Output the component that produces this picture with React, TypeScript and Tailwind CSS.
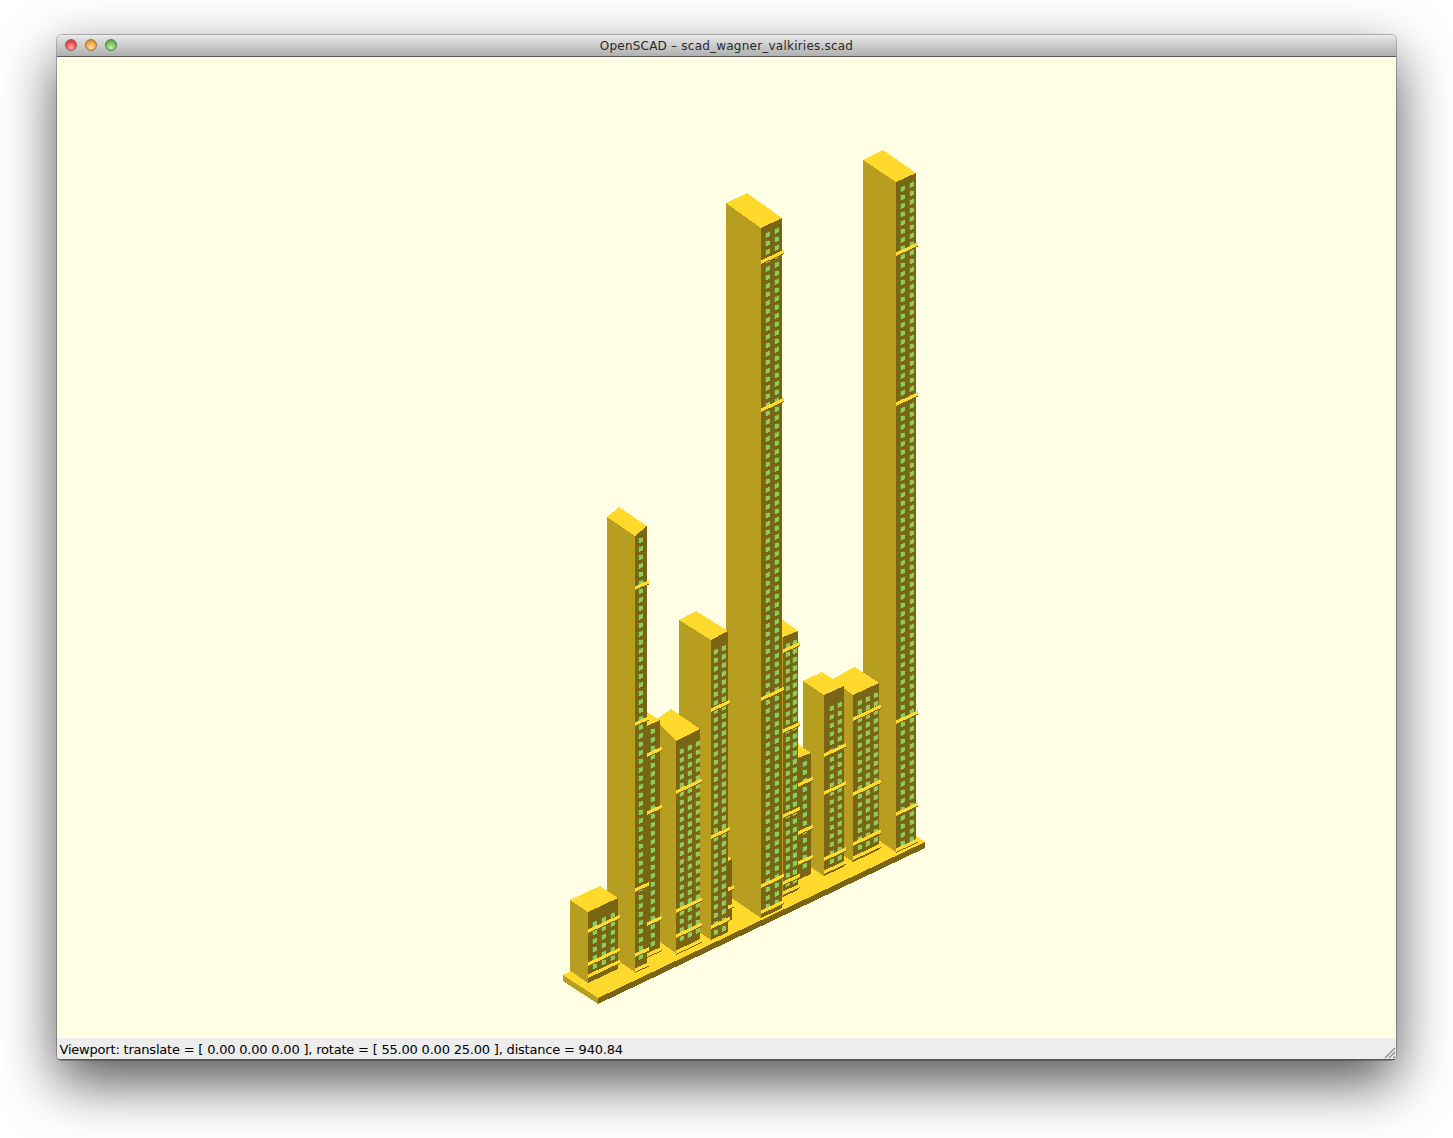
const TOP = "#ffd92b";
const LEFT = "#b89e20";
const RIGHT = "#7a6514";
const WINDOW_DARK = "#5f8a2c";
const WINDOW_LIGHT = "#93c95a";
const SLOPE = 0.47;
const PITCH = 8.5;

type Tower = {
  left: number;
  front: number;
  right: number;
  yLeft: number;
  yFront: number;
  yRight: number;
  apex: [number, number];
  bottom: number;
  cols: number[];
  inset: number;
  bands: number[];
};

// painted back to front, right end of the row first
const towers: Tower[] = [
  { left: 863, front: 896, right: 916, yLeft: 160, yFront: 182, yRight: 173, apex: [883, 150], bottom: 852, cols: [900, 909], inset: 5, bands: [256, 406, 724, 816, 852] },
  { left: 832, front: 853, right: 879, yLeft: 679, yFront: 695, yRight: 683, apex: [855, 667], bottom: 862, cols: [857, 865, 873], inset: 6, bands: [721, 796, 846, 860] },
  { left: 803, front: 824, right: 844, yLeft: 681, yFront: 695, yRight: 686, apex: [822, 672], bottom: 876, cols: [829, 837], inset: 12, bands: [757, 795, 861, 874] },
  { left: 790, front: 798, right: 811, yLeft: 752, yFront: 758, yRight: 753, apex: [798, 744], bottom: 880, cols: [802], inset: 4, bands: [787, 835, 865] },
  { left: 770, front: 783, right: 798, yLeft: 628, yFront: 637, yRight: 631, apex: [783, 620], bottom: 897, cols: [785, 792], inset: 6, bands: [653, 733, 818, 885, 895] },
  { left: 726, front: 761, right: 782, yLeft: 203, yFront: 228, yRight: 218, apex: [747, 193], bottom: 918, cols: [765, 774], inset: 5, bands: [264, 412, 701, 888, 914] },
  { left: 715, front: 720, right: 732, yLeft: 860, yFront: 865, yRight: 859, apex: [720, 851], bottom: 925, cols: [], inset: 0, bands: [895, 913] },
  { left: 679, front: 711, right: 728, yLeft: 620, yFront: 640, yRight: 631, apex: [696, 611], bottom: 940, cols: [713, 721], inset: 9, bands: [712, 839, 929] },
  { left: 656, front: 676, right: 700, yLeft: 720, yFront: 741, yRight: 729, apex: [671, 709], bottom: 953, cols: [679, 687, 695], inset: 8, bands: [794, 913, 938, 954] },
  { left: 640, front: 647, right: 660, yLeft: 718, yFront: 726, yRight: 720, apex: [647, 712], bottom: 958, cols: [650], inset: 3, bands: [757, 815, 926, 957] },
  { left: 607, front: 635, right: 647, yLeft: 517, yFront: 536, yRight: 526, apex: [619, 507], bottom: 972, cols: [638], inset: 2, bands: [590, 726, 892, 957, 972] },
  { left: 570, front: 588, right: 618, yLeft: 900, yFront: 912, yRight: 898, apex: [600, 886], bottom: 983, cols: [592, 601, 610], inset: 10, bands: [933, 966, 978] },
];

function pts(list: number[][]) {
  return list.map((p) => p.join(",")).join(" ");
}

function TowerShape({ t }: { t: Tower }) {
  const bottomLeft = t.bottom - (t.front - t.left) * 0.68;
  const bottomRight = t.bottom - (t.right - t.front) * SLOPE;

  const windows: { x: number; y: number }[] = [];
  for (const x of t.cols) {
    const start = t.yFront + t.inset - (x - t.front) * SLOPE;
    const end = t.bottom - 3 - (x - t.front) * SLOPE;
    for (let y = start; y + 7 < end; y += PITCH) windows.push({ x, y });
  }

  return (
    <g>
      <polygon fill={LEFT} points={pts([[t.left, t.yLeft], [t.front, t.yFront], [t.front, t.bottom], [t.left, bottomLeft]])} />
      <polygon fill={RIGHT} points={pts([[t.front, t.yFront], [t.right, t.yRight], [t.right, bottomRight], [t.front, t.bottom]])} />
      <polygon fill={TOP} points={pts([[t.left, t.yLeft], t.apex, [t.right, t.yRight], [t.front, t.yFront]])} />
      {windows.map((w, i) => (
        <g key={i}>
          <polygon fill={WINDOW_DARK} points={pts([[w.x, w.y + 2], [w.x + 5, w.y], [w.x + 5, w.y + 5], [w.x, w.y + 7]])} />
          <polygon fill={WINDOW_LIGHT} points={pts([[w.x + 1, w.y + 2], [w.x + 5, w.y + 1], [w.x + 5, w.y + 5], [w.x + 1, w.y + 7]])} />
        </g>
      ))}
      {t.bands.map((y) => {
        const x1 = t.right + 2;
        const y1 = y - (x1 - t.front) * SLOPE;
        return (
          <g key={y}>
            <polygon fill={RIGHT} points={pts([[t.front, y], [x1, y1], [x1, y1 + 1], [t.front, y + 1]])} />
            <polygon fill={TOP} points={pts([[t.front, y - 3.5], [x1, y1 - 3.5], [x1, y1], [t.front, y]])} />
          </g>
        );
      })}
    </g>
  );
}

function Scene() {
  return (
    <svg className="block h-full w-full" viewBox="57 57 1339 981" shapeRendering="crispEdges">
      <polygon fill={TOP} points={pts([[563, 975], [890, 819], [916, 836], [925, 842], [598, 998]])} />
      <polygon fill={LEFT} points={pts([[563, 975], [598, 998], [598, 1004], [563, 981]])} />
      <polygon fill={RIGHT} points={pts([[598, 998], [925, 842], [925, 848], [598, 1004]])} />
      {towers.map((t) => (
        <TowerShape key={t.front} t={t} />
      ))}
    </svg>
  );
}

const font = "[font-family:'DejaVu_Sans',sans-serif]";

export default function App() {
  return (
    <div className="h-[1138px] w-[1453px] overflow-hidden bg-white pl-[57px] pt-[35px]">
      <div className="relative flex h-[1025px] w-[1339px] flex-col rounded-[5px] shadow-[0_0_0_1px_rgba(0,0,0,0.25),0_22px_56px_rgba(0,0,0,0.68)]">
        <div className="relative flex h-[22px] shrink-0 items-center justify-center rounded-t-[5px] border-b border-[#5b5b5b] bg-[linear-gradient(#ececec,#dcdcdc_20%,#b0b0b0)]">
          <div className="absolute left-2 top-1 flex gap-2">
            <span className="h-3 w-3 rounded-full border border-[#8d5a5a] bg-[radial-gradient(circle_at_50%_75%,#ffb0b0,#f04a50_55%,#b82a30)]" />
            <span className="h-3 w-3 rounded-full border border-[#8d7345] bg-[radial-gradient(circle_at_50%_75%,#ffe0a0,#f2a540_55%,#b97a25)]" />
            <span className="h-3 w-3 rounded-full border border-[#5b7f52] bg-[radial-gradient(circle_at_50%_75%,#c8f0a8,#78bf5c_55%,#4b8c3c)]" />
          </div>
          <span className={`${font} pt-px text-[12px] leading-none tracking-[0.22px] text-[#2a2a2a]`}>OpenSCAD – scad_wagner_valkiries.scad</span>
        </div>
        <div className="min-h-0 flex-1 bg-[#ffffe5]">
          <Scene />
        </div>
        <div className="relative flex h-[22px] shrink-0 items-center rounded-b-[3px] border-b border-[#555] bg-[#ededed] pl-[2.5px] pt-[2px]">
          <span className={`${font} text-[13px] leading-none tracking-[-0.2px] text-black`}>
            Viewport: translate = [ 0.00 0.00 0.00 ], rotate = [ 55.00 0.00 25.00 ], distance = 940.84
          </span>
          <svg className="absolute bottom-0 right-0" width="12" height="12" viewBox="0 0 12 12">
            <path d="M1 11 11 1M5 11 11 5M9 11 11 9" stroke="#8a8a8a" strokeWidth="1.2" fill="none" />
          </svg>
        </div>
      </div>
    </div>
  );
}
